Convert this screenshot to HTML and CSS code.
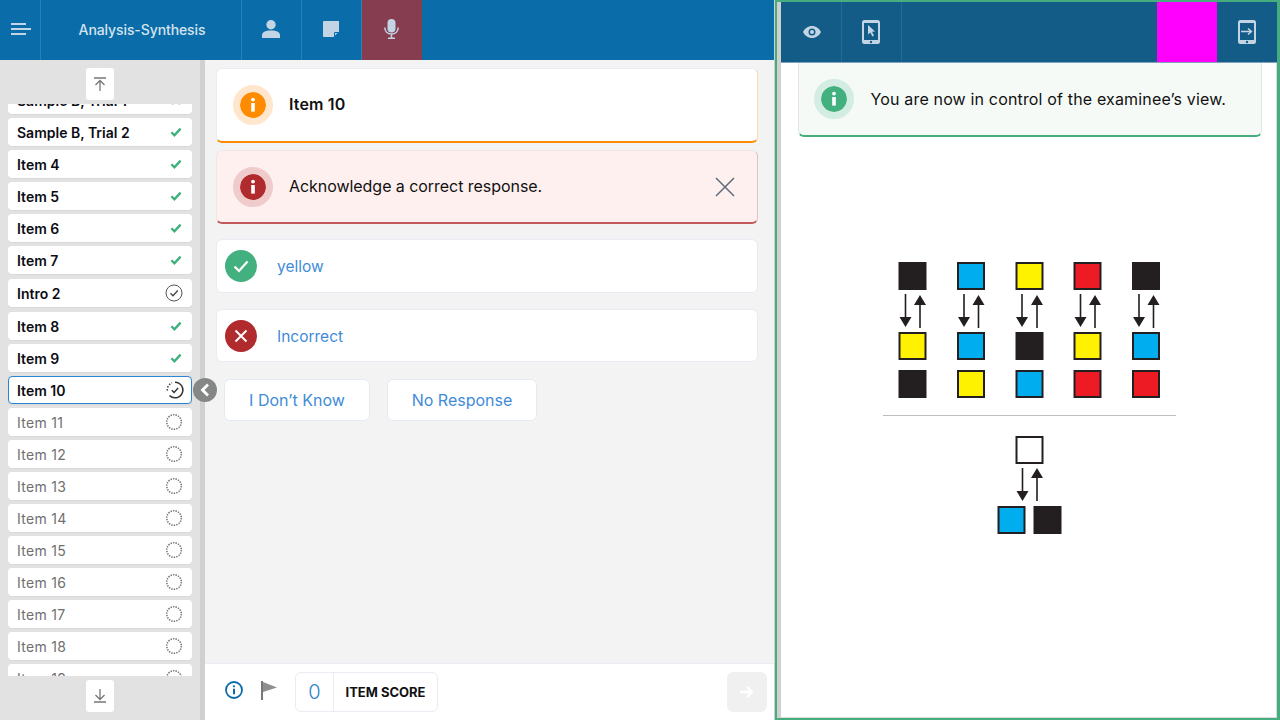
FILE: index.html
```html
<!DOCTYPE html>
<html lang="en">

<head>
    <meta charset="UTF-8">
    <meta name="viewport" content="width=device-width, initial-scale=1.0">
    <title>Analysis-Synthesis</title>
    <link rel="stylesheet" href="styles.css">
</head>

<body>
    <svg class="defs" width="0" height="0">
        <symbol id="check" viewBox="0 0 14 12">
            <path d="M1.500 6.300l3.600 3.600L12.500 2" fill="none" stroke="currentColor" stroke-width="2.800" />
        </symbol>
        <symbol id="todo" viewBox="0 0 18 18">
            <circle cx="9" cy="9" r="7.300" fill="none" stroke="#777" stroke-width="1.600" stroke-dasharray="1.400 1.150" />
        </symbol>
        <symbol id="info" viewBox="0 0 26 26">
            <circle cx="13" cy="7.600" r="1.900" fill="currentColor" />
            <rect x="11.200" y="11" width="3.600" height="8.600" fill="currentColor" />
        </symbol>
        <symbol id="tablet" viewBox="0 0 18 24">
            <path fill-rule="evenodd" d="M2.500 0h13A2.500 2.500 0 0 1 18 2.500v19a2.500 2.500 0 0 1-2.500 2.500h-13A2.500 2.500 0 0 1 0 21.500v-19A2.500 2.500 0 0 1 2.500 0zM2 3v17h14V3zM9 20.800a1.200 1.200 0 1 0 0 2.400a1.200 1.200 0 0 0 0-2.400z" fill="currentColor" />
        </symbol>
    </svg>

    <div class="app">
        <div class="examiner">
            <header class="topbar">
                <div class="tab tab-menu">
                    <svg width="20" height="12" viewBox="0 0 20 12">
                        <path d="M0 1h15M0 6h20M0 11h15" stroke="#c3d5e4" stroke-width="2" />
                    </svg>
                </div>
                <div class="tab tab-title">Analysis-Synthesis</div>
                <div class="tab">
                    <svg width="18" height="18" viewBox="0 0 18 18">
                        <circle cx="9" cy="4.700" r="4.700" fill="#c3d5e4" />
                        <path d="M0 18v-2.500C0 12 3 10.500 9 10.500s9 1.500 9 5V18z" fill="#c3d5e4" />
                    </svg>
                </div>
                <div class="tab">
                    <svg width="16" height="16" viewBox="0 0 16 16">
                        <path d="M1 0h15v10.500L10.500 16H1a1 1 0 0 1-1-1V1a1 1 0 0 1 1-1z" fill="#c3d5e4" />
                        <path d="M11.500 15.500v-4h4" fill="none" stroke="#0a6daa" stroke-width="1" />
                    </svg>
                </div>
                <div class="tab tab-active">
                    <svg width="15" height="20" viewBox="0 0 15 20">
                        <rect x="3.500" y="0" width="8" height="13.500" rx="4" fill="#c3d5e4" />
                        <path d="M.8 8.500c0 4 2.700 6.500 6.700 6.500s6.700-2.500 6.700-6.500M7.500 15v4M4 19.200h7" fill="none" stroke="#c3d5e4" stroke-width="1.500" />
                    </svg>
                </div>
            </header>

            <div class="workarea">
                <aside class="sidebar">
                    <nav class="item-nav">
                        <div class="nav-btn-row">
                            <button class="nav-btn">
                                <svg width="14" height="14" viewBox="0 0 14 14">
                                    <path d="M1 1h12M7 14V3.500M2.500 8L7 3.500 11.500 8" fill="none" stroke="#777" stroke-width="1.300" />
                                </svg>
                            </button>
                        </div>
                        <div class="item-scroll">
                            <ul class="item-list">
                                <li class="item done">Sample B, Trial 1<svg class="mark mark-wrong" width="12" height="12" viewBox="0 0 12 12"><path d="M2 2l8 8M10 2l-8 8" stroke="currentColor" stroke-width="2.200" /></svg></li>
                                <li class="item done">Sample B, Trial 2<svg class="mark" width="12" height="10"><use href="#check" /></svg></li>
                                <li class="item done">Item 4<svg class="mark" width="12" height="10"><use href="#check" /></svg></li>
                                <li class="item done">Item 5<svg class="mark" width="12" height="10"><use href="#check" /></svg></li>
                                <li class="item done">Item 6<svg class="mark" width="12" height="10"><use href="#check" /></svg></li>
                                <li class="item done">Item 7<svg class="mark" width="12" height="10"><use href="#check" /></svg></li>
                                <li class="item done item-intro">Intro 2
                                    <svg class="status" width="18" height="18" viewBox="0 0 18 18">
                                        <circle cx="9" cy="9" r="8" fill="none" stroke="#555" stroke-width="1" />
                                        <path d="M5.500 9.200l2.500 2.500 4.800-5.200" fill="none" stroke="#444" stroke-width="1.300" />
                                    </svg>
                                </li>
                                <li class="item done">Item 8<svg class="mark" width="12" height="10"><use href="#check" /></svg></li>
                                <li class="item done">Item 9<svg class="mark" width="12" height="10"><use href="#check" /></svg></li>
                                <li class="item done item-current">Item 10
                                    <svg class="status" width="18" height="18" viewBox="0 0 18 18">
                                        <path d="M9 1.200A7.800 7.800 0 1 1 3.500 14.500" fill="none" stroke="#333" stroke-width="1.500" />
                                        <path d="M1.300 9.500A7.800 7.800 0 0 1 6 1.800" fill="none" stroke="#333" stroke-width="1.500" stroke-dasharray="1.400 1.600" />
                                        <path d="M5.800 9.200l2.300 2.300 4-4.500" fill="none" stroke="#333" stroke-width="1.400" />
                                    </svg>
                                </li>
                                <li class="item">Item 11<svg class="status" width="18" height="18"><use href="#todo" /></svg></li>
                                <li class="item">Item 12<svg class="status" width="18" height="18"><use href="#todo" /></svg></li>
                                <li class="item">Item 13<svg class="status" width="18" height="18"><use href="#todo" /></svg></li>
                                <li class="item">Item 14<svg class="status" width="18" height="18"><use href="#todo" /></svg></li>
                                <li class="item">Item 15<svg class="status" width="18" height="18"><use href="#todo" /></svg></li>
                                <li class="item">Item 16<svg class="status" width="18" height="18"><use href="#todo" /></svg></li>
                                <li class="item">Item 17<svg class="status" width="18" height="18"><use href="#todo" /></svg></li>
                                <li class="item">Item 18<svg class="status" width="18" height="18"><use href="#todo" /></svg></li>
                                <li class="item">Item 19<svg class="status" width="18" height="18"><use href="#todo" /></svg></li>
                            </ul>
                        </div>
                        <div class="nav-btn-row nav-btn-row-bottom">
                            <button class="nav-btn">
                                <svg width="14" height="14" viewBox="0 0 14 14">
                                    <path d="M1 13h12M7 0v10.500M2.500 6L7 10.500 11.500 6" fill="none" stroke="#777" stroke-width="1.300" />
                                </svg>
                            </button>
                        </div>
                    </nav>
                    <div class="collapse-handle">
                        <svg width="10" height="14" viewBox="0 0 10 14">
                            <path d="M8 1.500L2.500 7 8 12.500" fill="none" stroke="#fff" stroke-width="2.800" />
                        </svg>
                    </div>
                </aside>

                <main class="panel">
                    <div class="panel-body">
                        <div class="banner banner-item">
                            <span class="badge badge-orange"><svg width="26" height="26"><use href="#info" /></svg></span>
                            <span class="banner-title">Item 10</span>
                        </div>
                        <div class="banner banner-alert">
                            <span class="badge badge-red"><svg width="26" height="26"><use href="#info" /></svg></span>
                            <span class="banner-text">Acknowledge a correct response.</span>
                            <svg class="banner-close" width="20" height="20" viewBox="0 0 20 20">
                                <path d="M1 1l18 18M19 1L1 19" stroke="#5f6b76" stroke-width="1.500" />
                            </svg>
                        </div>
                        <div class="answer answer-first">
                            <span class="answer-icon answer-yes">
                                <svg width="16" height="14" viewBox="0 0 16 14"><path d="M1.500 7.500l4.500 4.500 8.500-9.500" fill="none" stroke="#fff" stroke-width="2.200" /></svg>
                            </span>
                            <span class="answer-text">yellow</span>
                        </div>
                        <div class="answer">
                            <span class="answer-icon answer-no">
                                <svg width="14" height="14" viewBox="0 0 14 14"><path d="M1.500 1.500l11 11M12.500 1.500l-11 11" stroke="#fff" stroke-width="2" /></svg>
                            </span>
                            <span class="answer-text">Incorrect</span>
                        </div>
                        <div class="quick-row">
                            <button class="quick-btn quick-dk">I Don’t Know</button>
                            <button class="quick-btn quick-nr">No Response</button>
                        </div>
                    </div>
                    <footer class="panel-footer">
                        <svg class="foot-info" width="18" height="18" viewBox="0 0 18 18">
                            <circle cx="9" cy="9" r="8" fill="none" stroke="#0a6daa" stroke-width="1.800" />
                            <circle cx="9" cy="5.300" r="1.100" fill="#0a6daa" />
                            <rect x="8" y="7.700" width="2" height="5.600" fill="#0a6daa" />
                        </svg>
                        <svg class="foot-flag" width="16" height="20" viewBox="0 0 16 20">
                            <rect x="0" y="0" width="2" height="19" fill="#777" />
                            <path d="M2 1l14 5.500L2 11z" fill="#8f8f8f" />
                        </svg>
                        <div class="score-box">
                            <span class="score-value">0</span>
                            <span class="score-label">ITEM SCORE</span>
                        </div>
                        <button class="next-btn">
                            <svg width="14" height="12" viewBox="0 0 14 12">
                                <path d="M1 6h11M7.500 1.500L12 6l-4.500 4.500" fill="none" stroke="#fff" stroke-width="2.400" stroke-linecap="round" />
                            </svg>
                        </button>
                    </footer>
                </main>
            </div>
        </div>

        <section class="examinee">
            <div class="ee-bar">
                <div class="ee-tab ee-tab-first">
                    <svg width="18" height="12" viewBox="0 0 18 12">
                        <path fill-rule="evenodd" d="M9 0c4 0 7.200 2.500 9 6c-1.800 3.500-5 6-9 6s-7.200-2.500-9-6c1.800-3.500 5-6 9-6zM9 2.500a3.500 3.500 0 1 0 0 7a3.500 3.500 0 0 0 0-7z" fill="#c3d5e4" />
                        <circle cx="9" cy="6" r="2" fill="#c3d5e4" />
                    </svg>
                </div>
                <div class="ee-tab">
                    <svg class="ee-icon" width="18" height="24">
                        <use href="#tablet" />
                        <path d="M6 5l7 6.500-3 .3 2 4-1.600.8-2-4-2.400 2z" fill="#c3d5e4" />
                    </svg>
                </div>
                <div class="ee-spacer"></div>
                <div class="ee-magenta"></div>
                <div class="ee-tab ee-tab-end">
                    <svg width="18" height="24">
                        <use href="#tablet" />
                        <path d="M3 11.500h10M10 8.500l3.500 3-3.500 3" fill="none" stroke="#c3d5e4" stroke-width="1.400" />
                    </svg>
                </div>
            </div>

            <div class="ee-body">
                <div class="notice">
                    <span class="badge badge-green"><svg width="26" height="26"><use href="#info" /></svg></span>
                    <span class="notice-text">You are now in control of the examinee’s view.</span>
                </div>

                <svg class="puzzle" width="293" height="277" viewBox="883 261 293 277">
                    <g stroke-width="2" stroke="#231f20">
                        <rect x="899.500" y="263" width="26" height="26" fill="#231f20" />
                        <rect x="958" y="263" width="26" height="26" fill="#00aeef" />
                        <rect x="1016.500" y="263" width="26" height="26" fill="#fff200" />
                        <rect x="1074.500" y="263" width="26" height="26" fill="#ed1c24" />
                        <rect x="1133" y="263" width="26" height="26" fill="#231f20" />
                        <rect x="899.500" y="333" width="26" height="26" fill="#fff200" />
                        <rect x="958" y="333" width="26" height="26" fill="#00aeef" />
                        <rect x="1016.500" y="333" width="26" height="26" fill="#231f20" />
                        <rect x="1074.500" y="333" width="26" height="26" fill="#fff200" />
                        <rect x="1133" y="333" width="26" height="26" fill="#00aeef" />
                        <rect x="899.500" y="371" width="26" height="26" fill="#231f20" />
                        <rect x="958" y="371" width="26" height="26" fill="#fff200" />
                        <rect x="1016.500" y="371" width="26" height="26" fill="#00aeef" />
                        <rect x="1074.500" y="371" width="26" height="26" fill="#ed1c24" />
                        <rect x="1133" y="371" width="26" height="26" fill="#ed1c24" />
                        <rect x="1016.500" y="437" width="26" height="26" fill="#fff" />
                        <rect x="998.500" y="507" width="26" height="26" fill="#00aeef" />
                        <rect x="1034.500" y="507" width="26" height="26" fill="#231f20" />
                    </g>
                    <g stroke="#231f20" stroke-width="1.600">
                        <path d="M905.500 294v24M920 328v-24M964 294v24M978.500 328v-24M1022 294v24M1037 328v-24M1080.500 294v24M1095 328v-24M1139 294v24M1153.500 328v-24M1022.500 468v24M1037 501v-24" />
                    </g>
                    <g fill="#231f20">
                        <path d="M899.500 317h12l-6 10zM958 317h12l-6 10zM1016 317h12l-6 10zM1074.500 317h12l-6 10zM1133 317h12l-6 10zM1016.500 491h12l-6 10z" />
                        <path d="M914 305h12l-6-10zM972.500 305h12l-6-10zM1031 305h12l-6-10zM1089 305h12l-6-10zM1147.500 305h12l-6-10zM1031 478h12l-6-10z" />
                    </g>
                    <path d="M883 415.500h293" stroke="#bdbdbd" stroke-width="1" />
                </svg>
            </div>
        </section>
    </div>
</body>

</html>
```

FILE: styles.css
```css
* {
    box-sizing: border-box;
}

body {
    margin: 0;
    font-family: Inter, "Liberation Sans", sans-serif;
    color: #111;
    background-color: #fff;
    overflow: hidden;
}

.defs {
    display: block;
    height: 0;
}

button {
    font-family: inherit;
    cursor: pointer;
}

.app {
    display: flex;
    width: 1280px;
    height: 720px;
}

/* left side */
.examiner {
    display: flex;
    flex-direction: column;
    width: 775px;
    flex: none;
    border-right: 1px solid #cfcfcf;
}

.topbar {
    display: flex;
    height: 60px;
    flex: none;
    background-color: #0a6daa;
}

.tab {
    display: flex;
    align-items: center;
    justify-content: center;
    width: 60px;
    padding: 0 2px 2px 0;
    border-right: 1px solid #2a7fb5;
}

.tab-menu {
    width: 41px;
    padding: 0 0 2px 2px;
}

.tab-title {
    width: 201px;
    padding: 0 0 2px 2px;
    color: #d5e3ee;
    font-size: 14px;
    font-weight: 500;
    letter-spacing: -0.1px;
}

.tab-active {
    background-color: #863d4f;
    border-right: none;
}

.workarea {
    display: flex;
    flex: 1;
    min-height: 0;
}

.sidebar {
    position: relative;
    display: flex;
    width: 205px;
    flex: none;
    background-color: #e2e2e2;
    border-right: 5px solid #d0d0d0;
}

.item-nav {
    display: flex;
    flex-direction: column;
    width: 200px;
}

.nav-btn-row {
    display: flex;
    justify-content: center;
    height: 44px;
    padding-top: 8px;
    flex: none;
}

.nav-btn-row-bottom {
    padding-top: 4px;
}

.nav-btn {
    display: flex;
    align-items: center;
    justify-content: center;
    width: 28px;
    height: 32px;
    padding: 0;
    border: none;
    border-radius: 3px;
    background-color: #fff;
}

.item-scroll {
    flex: 1;
    min-height: 0;
    overflow: hidden;
}

.item-list {
    list-style: none;
    margin: -18px 8px 0;
    padding: 0;
}

.item {
    display: flex;
    align-items: center;
    justify-content: space-between;
    height: 28px;
    margin-bottom: 4px;
    padding: 0 9px;
    border-radius: 4px;
    background-color: #fff;
    box-shadow: 0 1px 0 #d8d8d8;
    color: #6f6f6f;
    font-size: 14px;
    letter-spacing: 0.3px;
}

.item.done {
    color: #0c0c14;
    font-weight: 600;
    letter-spacing: 0;
}

.item-intro {
    margin-top: 5px;
    margin-bottom: 5px;
}

.item-current {
    border: 1.500px solid #2b85d0;
    padding: 0 7.500px 0 8px;
}

.mark {
    color: #3eb07c;
    margin-right: 1px;
}

.mark-wrong {
    color: #d9534f;
}

.collapse-handle {
    position: absolute;
    left: 193px;
    top: 318px;
    display: flex;
    align-items: center;
    justify-content: center;
    width: 24px;
    height: 24px;
    border-radius: 50%;
    background-color: #858787;
    z-index: 2;
}

.panel {
    display: flex;
    flex-direction: column;
    flex: 1;
    min-width: 0;
    background-color: #f3f3f4;
}

.panel-body {
    flex: 1;
    padding: 8px 16px 0 11px;
}

.banner {
    display: flex;
    align-items: center;
    padding-left: 16px;
    border: 1px solid #e9ecf3;
    border-radius: 6px;
}

.banner-item {
    height: 75px;
    background-color: #fff;
    border-bottom: 2px solid #ff8c00;
    border-right-color: #fbd9ad;
}

.banner-alert {
    height: 74px;
    margin-top: 7px;
    background-color: #fff0f0;
    border-color: #f0e6e6;
    border-bottom: 2px solid #c05a5c;
    border-right-color: #e3c0c3;
}

.badge {
    display: flex;
    align-items: center;
    justify-content: center;
    flex: none;
    width: 40px;
    height: 40px;
    border-radius: 50%;
    background-clip: padding-box;
    border: 7px solid;
    color: #fff;
}

.badge-orange {
    background-color: #ff8c00;
    border-color: #ffe6cc;
}

.badge-red {
    background-color: #b02a2e;
    border-color: #efcbcc;
}

.badge-green {
    background-color: #43b17f;
    border-color: #d3ede2;
}

.banner-title {
    margin: 0 0 2px 16px;
    font-size: 16px;
    font-weight: 600;
    letter-spacing: 0.15px;
}

.banner-text {
    margin: 0 0 1px 16px;
    font-size: 16px;
    letter-spacing: -0.05px;
}

.banner-close {
    margin-left: auto;
    margin-right: 22px;
}

.answer {
    display: flex;
    align-items: center;
    height: 53px;
    margin-top: 16px;
    padding-left: 8px;
    background-color: #fff;
    border: 1px solid #e9ecf3;
    border-radius: 6px;
}

.answer-first {
    height: 54px;
    margin-top: 15px;
}

.answer-icon {
    display: flex;
    align-items: center;
    justify-content: center;
    width: 32px;
    height: 32px;
    border-radius: 50%;
}

.answer-yes {
    background-color: #43b17f;
}

.answer-no {
    background-color: #b02a2e;
}

.answer-text {
    margin-left: 20px;
    padding-top: 1px;
    color: #3f8bd8;
    font-size: 15.500px;
}

.quick-row {
    display: flex;
    gap: 17px;
    margin-top: 17px;
    padding-left: 8px;
}

.quick-btn {
    height: 42px;
    background-color: #fff;
    border: 1px solid #e4eaf3;
    border-radius: 6px;
    color: #3f8bd8;
    font-size: 16px;
}

.quick-dk {
    width: 146px;
}

.quick-nr {
    width: 150px;
}

.panel-footer {
    display: flex;
    align-items: center;
    height: 57px;
    flex: none;
    padding: 0 7px 0 20px;
    background-color: #fff;
    border-top: 1px solid #e9ecf3;
}

.foot-info {
    margin-top: -4px;
}

.foot-flag {
    margin: -3px 0 0 18px;
}

.score-box {
    display: flex;
    align-items: center;
    height: 40px;
    margin-left: 18px;
    border: 1px solid #e9ecf3;
    border-radius: 6px;
}

.score-value {
    display: flex;
    align-items: center;
    justify-content: center;
    width: 38px;
    height: 100%;
    border-right: 1px solid #e9ecf3;
    color: #2f7fc8;
    font-size: 20px;
    font-weight: 300;
}

.score-label {
    width: 103px;
    text-align: center;
    font-size: 13px;
    font-weight: 700;
}

.next-btn {
    display: flex;
    align-items: center;
    justify-content: center;
    width: 40px;
    height: 40px;
    margin-left: auto;
    padding: 0;
    border: none;
    border-radius: 6px;
    background-color: #f0f0f0;
}

/* right side */
.examinee {
    display: flex;
    flex-direction: column;
    flex: 1;
    min-width: 0;
    border: 2px solid #46ad7f;
    border-right-width: 3px;
    background-color: #fff;
    box-shadow: inset 4px 0 0 #d0d0d0, inset -1px -1px 0 #dcdcdc;
}

.ee-bar {
    display: flex;
    height: 61px;
    flex: none;
    margin-left: 4px;
    background-color: #145c88;
    border-bottom: 1px solid #7fa3bd;
}

.ee-tab {
    display: flex;
    align-items: center;
    justify-content: center;
    width: 60px;
    border-right: 1px solid #1f6c9f;
    color: #c3d5e4;
}

.ee-tab-first {
    width: 61px;
    padding-left: 2px;
}

.ee-tab-end {
    border-right: none;
}

.ee-icon {
    margin-right: 2px;
}

.ee-spacer {
    flex: 1;
}

.ee-magenta {
    width: 60px;
    background-color: #ff00ff;
}

.ee-body {
    display: flex;
    flex-direction: column;
    align-items: center;
    flex: 1;
    padding-left: 5px;
}

.notice {
    display: flex;
    align-items: center;
    width: 464px;
    height: 74px;
    padding-left: 15px;
    background-color: #f6faf7;
    border: 1px solid #dde8e3;
    border-top: none;
    border-bottom: 2px solid #46ad7f;
    border-radius: 0 0 6px 6px;
}

.notice-text {
    margin-left: 17px;
    font-size: 16px;
    letter-spacing: 0.16px;
}

.puzzle {
    margin-top: 124px;
}
```
